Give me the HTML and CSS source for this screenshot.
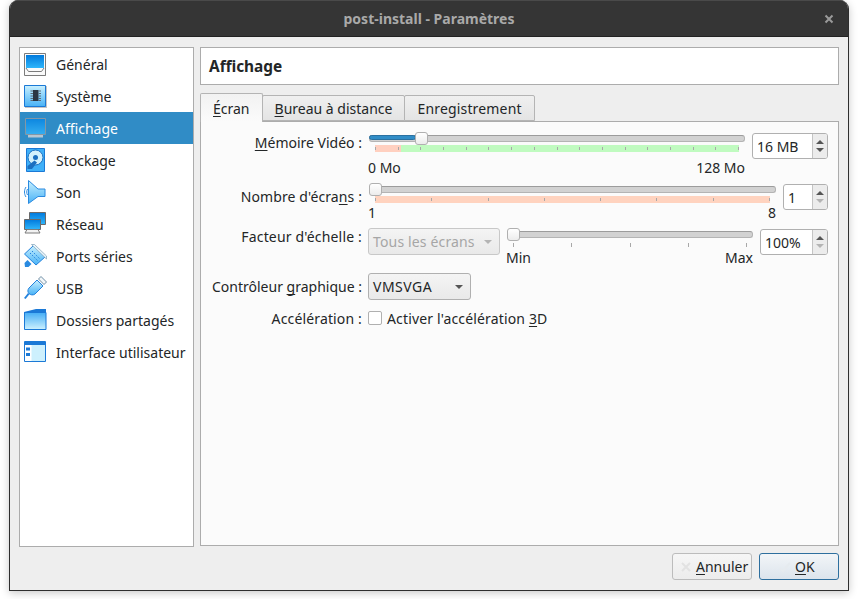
FILE: index.html
```html
<!DOCTYPE html>
<html lang="fr">

<head>
    <title>post-install - Paramètres</title>
    <link rel="stylesheet" href="styles.css">
</head>

<body>
    <!-- gradients shared by the sidebar icons -->
    <svg class="defs" width="0" height="0">
        <defs>
            <linearGradient id="screen" x1="0" y1="0" x2="0" y2="1">
                <stop offset="0" stop-color="#0079dc" />
                <stop offset="1" stop-color="#2fb6fb" />
            </linearGradient>
            <linearGradient id="pale" x1="0" y1="0" x2="0" y2="1">
                <stop offset="0" stop-color="#45aef5" />
                <stop offset="1" stop-color="#cdf1fe" />
            </linearGradient>
            <linearGradient id="paleup" x1="0" y1="0" x2="0" y2="1">
                <stop offset="0" stop-color="#c9f0fe" />
                <stop offset="1" stop-color="#48b2f6" />
            </linearGradient>
            <linearGradient id="selected" x1="0" y1="0" x2="0" y2="1">
                <stop offset="0" stop-color="#0c86e0" />
                <stop offset="1" stop-color="#35aef0" />
            </linearGradient>
        </defs>
    </svg>

    <div class="window">
        <div class="titlebar">
            <span class="title">post-install - Paramètres</span>
            <svg class="close" width="10" height="10" viewBox="0 0 10 10">
                <path d="M1.500 1.500l7 7M8.500 1.500l-7 7" stroke="#9a9a9a" stroke-width="2" fill="none" />
            </svg>
        </div>

        <div class="content">
            <div class="main">
                <ul class="nav">
                    <li>
                        <svg class="icon" viewBox="0 0 24 24">
                            <path d="M1 2h21v22H1z" fill="#c4c4c4" />
                            <path d="M.5 1.500h21v22H.5z" fill="#fafafa" stroke="#7b7b7b" />
                            <path d="M2 3h18v13H2z" fill="url(#screen)" />
                            <path d="M2 16l2.500 3.500h13L20 16" fill="none" stroke="#7b7b7b" />
                        </svg>
                        Général
                    </li>
                    <li>
                        <svg class="icon" viewBox="0 0 24 24">
                            <path d="M1 2h22v22H1z" fill="#c4c4c4" />
                            <path d="M.5 1.500h21v21H.5z" fill="url(#paleup)" stroke="#1b79d6" />
                            <path d="M9 6h5.500v11H9z" fill="#2b3644" />
                            <path d="M6.500 7h2.500M6.500 9.500h2.500M6.500 12h2.500M6.500 14.500h2.500M6.500 16.500h2.500M14.500 7H17M14.500 9.500H17M14.500 12H17M14.500 14.500H17M14.500 16.500H17" stroke="#5b6a78" />
                        </svg>
                        Système
                    </li>
                    <li class="active">
                        <svg class="icon" viewBox="0 0 24 24">
                            <path d="M4 18.500h15v3H4z" fill="#b6c6d2" />
                            <path d="M1.500 2.500h20v16h-20z" fill="url(#selected)" stroke="#8397a6" />
                        </svg>
                        Affichage
                    </li>
                    <li>
                        <svg class="icon" viewBox="0 0 24 24">
                            <path d="M2.500 .5h18v23h-18z" fill="#3fb0f8" stroke="#1b79d6" />
                            <circle cx="11.500" cy="9.500" r="7.500" fill="#d3f1fd" stroke="#1b6fc0" />
                            <circle cx="11.500" cy="9.500" r="2.500" fill="#1b6fc0" />
                            <path d="M3.500 18l7-5.500 2.500 2-5 6.500H3.500z" fill="#1b6fc0" />
                        </svg>
                        Stockage
                    </li>
                    <li>
                        <svg class="icon" viewBox="0 0 24 24">
                            <path d="M4.500 .5l9.500 8.500h7v7.500h-7l-9.500 7z" fill="url(#paleup)" stroke="#2a8ae0" />
                            <path d="M2 7c-2 3-2 7 0 10M3.500 9c-1 2-1 4 0 6" fill="none" stroke="#2a8ae0" />
                        </svg>
                        Son
                    </li>
                    <li>
                        <svg class="icon" viewBox="0 0 24 24">
                            <path d="M5.500 .5h16v12h-16z" fill="url(#screen)" stroke="#6a6a6a" />
                            <path d="M.5 7.500h16v10H.5z" fill="url(#screen)" stroke="#6a6a6a" />
                            <path d="M3 17.500h11l2 3.500H1z" fill="#f2f2f2" stroke="#7b7b7b" />
                        </svg>
                        Réseau
                    </li>
                    <li>
                        <svg class="icon" viewBox="0 0 24 24">
                            <path d="M.5 10L9.500 1.500 21 13 12 21z" fill="url(#paleup)" stroke="#2382dc" />
                            <path d="M7.500 .5h3L22.500 12v3z" fill="#eaf6fc" stroke="#7d9db5" stroke-width=".7" />
                            <path d="M.5 19l3-3 4 4-3 3H1z" fill="#2a8ae0" />
                            <path d="M6 9l8 8M8 7l8 8" stroke="#2382dc" stroke-dasharray="1.500 1.500" />
                        </svg>
                        Ports séries
                    </li>
                    <li>
                        <svg class="icon" viewBox="0 0 24 24">
                            <path d="M5 12l8-8 6 6-8 8c-2 1.500-4.500 1-6-.5S3.500 14 5 12z" fill="url(#paleup)" stroke="#2382dc" />
                            <path d="M14.500 3l2.500-2.500 5.500 5.500-2.500 2.500z" fill="#f2f6f8" stroke="#6f8ea6" />
                            <path d="M.8 22.500l4-5" stroke="#2382dc" stroke-width="2" />
                        </svg>
                        USB
                    </li>
                    <li>
                        <svg class="icon" viewBox="0 0 24 24">
                            <path d="M12 1h10v4H0v-1z" fill="#1b79d6" />
                            <path d="M.5 4.500h21.500v17H.5z" fill="url(#pale)" stroke="#1b79d6" />
                        </svg>
                        Dossiers partagés
                    </li>
                    <li>
                        <svg class="icon" viewBox="0 0 24 24">
                            <path d="M.5 1.500h21v20H.5z" fill="#cdf0fd" stroke="#1b79d6" />
                            <path d="M1 2h20v3H1z" fill="#1b79d6" />
                            <path d="M1 5h6.500v16H1z" fill="#fff" />
                            <path d="M2 7.500h4v3H2zM2 13h4v3H2z" fill="#1b79d6" />
                        </svg>
                        Interface utilisateur
                    </li>
                </ul>

                <div class="page">
                    <div class="page-title">Affichage</div>

                    <div class="tabs">
                        <div class="tab current"><span><u>É</u>cran</span></div>
                        <div class="tab"><span><u>B</u>ureau à distance</span></div>
                        <div class="tab tab-record"><span>Enregistrement</span></div>
                    </div>

                    <div class="tab-panel">
                        <div class="row row-memory">
                            <label class="label"><u>M</u>émoire Vidéo :</label>
                            <div class="slider-group">
                                <div class="slider">
                                    <div class="slider-fill"></div>
                                    <div class="handle handle-memory"></div>
                                </div>
                                <div class="legend legend-memory">
                                    <i></i><i></i><i></i><i></i><i></i><i></i><i></i><i></i><i></i>
                                    <i></i><i></i><i></i><i></i><i></i><i></i><i></i><i></i>
                                </div>
                                <div class="ends"><span>0 Mo</span><span>128 Mo</span></div>
                            </div>
                            <div class="spin spin-memory">
                                <span class="spin-value">16 MB</span>
                                <span class="spin-arrows">
                                    <b class="up"></b><b class="down"></b>
                                </span>
                            </div>
                        </div>

                        <div class="row row-screens">
                            <label class="label">Nombre d'écra<u>n</u>s :</label>
                            <div class="slider-group">
                                <div class="slider">
                                    <div class="handle"></div>
                                </div>
                                <div class="legend legend-screens">
                                    <i></i><i></i><i></i><i></i><i></i><i></i><i></i><i></i>
                                </div>
                                <div class="ends"><span>1</span><span>8</span></div>
                            </div>
                            <div class="spin spin-screens">
                                <span class="spin-value">1</span>
                                <span class="spin-arrows">
                                    <b class="up"></b><b class="down off"></b>
                                </span>
                            </div>
                        </div>

                        <div class="row row-scale">
                            <label class="label">Facteur d'échelle :</label>
                            <div class="combo combo-disabled">
                                <span>Tous les écrans</span><b class="caret"></b>
                            </div>
                            <div class="slider-group">
                                <div class="slider">
                                    <div class="handle"></div>
                                </div>
                                <div class="legend legend-scale">
                                    <i></i><i></i><i></i><i></i><i></i>
                                </div>
                                <div class="ends"><span>Min</span><span>Max</span></div>
                            </div>
                            <div class="spin spin-scale">
                                <span class="spin-value">100%</span>
                                <span class="spin-arrows">
                                    <b class="up"></b><b class="down off"></b>
                                </span>
                            </div>
                        </div>

                        <div class="row row-controller">
                            <label class="label">Contrôleur <u>g</u>raphique :</label>
                            <div class="combo combo-controller">
                                <span>VMSVGA</span><b class="caret"></b>
                            </div>
                        </div>

                        <div class="row row-accel">
                            <label class="label">Accélération :</label>
                            <span class="checkbox"></span>
                            <span class="check-text">Activer l'accélération <u>3</u>D</span>
                        </div>
                    </div>
                </div>
            </div>

            <div class="buttons">
                <button class="btn btn-cancel">
                    <svg width="14" height="14" viewBox="0 0 14 14">
                        <path d="M3 3l8 8M11 3l-8 8" stroke="#e2e2e2" stroke-width="2" fill="none" />
                    </svg>
                    <span><u>A</u>nnuler</span>
                </button>
                <button class="btn btn-ok">
                    <svg width="14" height="14" viewBox="0 0 14 14">
                        <path d="M2 8l3 3 7-8" stroke="#e6ebef" stroke-width="2" fill="none" />
                    </svg>
                    <span><u>O</u>K</span>
                </button>
            </div>
        </div>
    </div>
</body>

</html>
```

FILE: styles.css
```css
* {
    box-sizing: border-box;
    font-family: "Noto Sans", sans-serif;
}

body {
    margin: 0;
    height: 599px;
    background-color: #ffffff;
    color: #232627;
    font-size: 14px;
    overflow: hidden;
}

u {
    text-underline-offset: 2px;
    text-decoration-skip-ink: none;
}

.defs {
    display: block;
}

.window {
    width: 840px;
    height: 591px;
    margin-left: 9px;
    border: 1px solid #2e2e2e;
    border-top: 0;
    border-radius: 9px 9px 0 0;
    background-color: #eeeeee;
    box-shadow: 0 2px 8px rgba(0, 0, 0, 0.22);
    overflow: hidden;
}

.titlebar {
    height: 37px;
    display: flex;
    align-items: center;
    justify-content: center;
    position: relative;
    background-color: #353535;
    border-top: 1px solid #4a4a4a;
    border-bottom: 1px solid #222222;
    color: #a9a9a9;
    font-weight: 700;
    font-size: 14px;
}

.close {
    position: absolute;
    right: 14px;
    top: 13px;
}

.content {
    padding: 10px 9px 0 9px;
}

.main {
    display: flex;
    gap: 6px;
}

.nav {
    width: 175px;
    height: 500px;
    margin: 0;
    padding: 0;
    list-style: none;
    background-color: #ffffff;
    border: 1px solid #acacac;
}

.nav li {
    height: 32px;
    display: flex;
    align-items: center;
    gap: 8px;
    padding-left: 4px;
    white-space: nowrap;
}

.nav li.active {
    background-color: #308cc6;
    color: #ffffff;
}

.icon {
    width: 24px;
    height: 24px;
    flex: none;
    overflow: visible;
}

.page {
    width: 639px;
}

.page-title {
    height: 38px;
    padding-left: 8px;
    line-height: 38px;
    background-color: #ffffff;
    border: 1px solid #acacac;
    font-size: 15.400px;
    font-weight: 700;
}

.tabs {
    display: flex;
    height: 29px;
    margin-top: 7px;
    align-items: flex-end;
}

.tab {
    height: 26px;
    margin-right: -1px;
    padding: 0 12px;
    line-height: 26px;
    background: linear-gradient(#f0f0f0, #e4e4e4);
    border: 1px solid #b4b4b4;
    border-radius: 2px 2px 0 0;
}

.tab-record {
    letter-spacing: 0.17px;
}

.tab.current {
    height: 29px;
    line-height: 29px;
    position: relative;
    z-index: 1;
    background: linear-gradient(#f2f2f2, #fbfbfb);
    border-bottom: 0;
    margin-bottom: -1px;
}

.tab-panel {
    height: 425px;
    padding-top: 9px;
    background-color: #fbfbfb;
    border: 1px solid #acacac;
}

.row {
    display: flex;
    align-items: flex-start;
    padding-right: 10px;
}

.label {
    width: 161px;
    margin-right: 6px;
    flex: none;
    text-align: right;
    white-space: nowrap;
}

.row-memory {
    height: 51px;
    padding-top: 2px;
}

.row-memory .label {
    line-height: 20px;
}

.row-screens {
    height: 44px;
    margin-top: 2px;
}

.row-screens .label {
    line-height: 25px;
    letter-spacing: 0.1px;
}

.row-scale {
    height: 45px;
}

.row-scale .label {
    line-height: 18px;
    letter-spacing: 0.17px;
}

.row-scale .slider-group {
    margin-top: 1px;
}

.row-controller {
    height: 38px;
}

.row-controller .label {
    line-height: 27px;
}

.row-accel .label,
.check-text {
    line-height: 16px;
    letter-spacing: 0.15px;
}

.slider-group {
    flex: 1;
    min-width: 0;
    margin-right: 7px;
    padding-left: 1px;
}

.slider {
    height: 10px;
    position: relative;
}

.slider::before {
    content: "";
    display: block;
    height: 5px;
    position: relative;
    top: 2px;
    background-color: #d2d2d2;
    border: 1px solid #b4b4b4;
    border-top-color: #9c9c9c;
    border-radius: 3px;
}

.slider-fill {
    position: absolute;
    left: 0;
    top: 2px;
    width: 47px;
    height: 5px;
    background-color: #308cc6;
    border: 1px solid #2a70a0;
    border-radius: 3px;
}

.handle {
    position: absolute;
    left: 0;
    top: -1px;
    width: 13px;
    height: 13px;
    background: linear-gradient(#ffffff, #ececec);
    border: 1px solid #b0b0b0;
    border-radius: 3px;
}

.handle-memory {
    left: 46px;
}

.legend {
    height: 7px;
    margin: 2px 6px 0;
    display: flex;
    justify-content: space-between;
}

.legend i {
    width: 1px;
    height: 3px;
    margin-top: 2px;
    background-color: #a8a8a8;
}

.legend-memory {
    background: linear-gradient(to right, #ffd0c0 0, #ffd0c0 26px, #c0fbc0 26px);
}

.legend-screens {
    background-color: #ffd3bf;
}

.legend-scale i {
    height: 4px;
    margin-top: 2px;
}

.ends {
    display: flex;
    justify-content: space-between;
    margin-left: -1px;
    line-height: 19px;
}

.row-memory .ends {
    margin-top: 6px;
}

.spin {
    height: 26px;
    flex: none;
    display: flex;
    background-color: #ffffff;
    border: 1px solid #b0b0b0;
    border-radius: 3px;
    overflow: hidden;
}

.spin-memory {
    width: 76px;
}

.spin-screens {
    width: 45px;
}

.spin-scale {
    width: 68px;
    margin-top: 1px;
}

.spin-value {
    flex: 1;
    padding-left: 4px;
    line-height: 25px;
    font-size: 14px;
}

.spin-arrows {
    width: 15px;
    display: flex;
    flex-direction: column;
    align-items: center;
    justify-content: center;
    gap: 4px;
    background-color: #ececec;
    border-left: 1px solid #c4c4c4;
}

.up,
.down {
    width: 0;
    height: 0;
    border-left: 4px solid transparent;
    border-right: 4px solid transparent;
}

.up {
    border-bottom: 4px solid #555555;
}

.down {
    border-top: 4px solid #555555;
}

.down.off {
    border-top-color: #b4b4b4;
}

.combo {
    height: 27px;
    flex: none;
    display: flex;
    align-items: center;
    justify-content: space-between;
    padding: 0 7px 0 4px;
    background: linear-gradient(#f4f4f4, #e9e9e9);
    border: 1px solid #b0b0b0;
    border-radius: 3px;
}

.combo-disabled {
    width: 132px;
    margin-right: 6px;
    color: #a6a6a6;
    letter-spacing: 0.15px;
    border-color: #c8c8c8;
}

.combo-disabled .caret {
    border-top-color: #b4b4b4;
}

.combo-controller {
    width: 103px;
    letter-spacing: 0.5px;
}

.caret {
    width: 0;
    height: 0;
    border-left: 4px solid transparent;
    border-right: 4px solid transparent;
    border-top: 4px solid #555555;
}

.checkbox {
    width: 14px;
    height: 14px;
    margin-right: 5px;
    background-color: #ffffff;
    border: 1px solid #b0b0b0;
    border-radius: 2px;
}

.buttons {
    display: flex;
    justify-content: flex-end;
    gap: 7px;
    margin-top: 6px;
}

.btn {
    height: 27px;
    display: flex;
    align-items: center;
    gap: 3px;
    padding: 0 0 0 6px;
    font-size: 14px;
    color: #232627;
    border-radius: 3px;
}

.btn-cancel {
    width: 80px;
    background: linear-gradient(#f6f6f6, #ececec);
    border: 1px solid #bcbcbc;
}

.btn-ok {
    width: 80px;
    padding-left: 18px;
    background: linear-gradient(#f2f5f8, #dce4ec);
    border: 1px solid #2e6f9e;
}
```
